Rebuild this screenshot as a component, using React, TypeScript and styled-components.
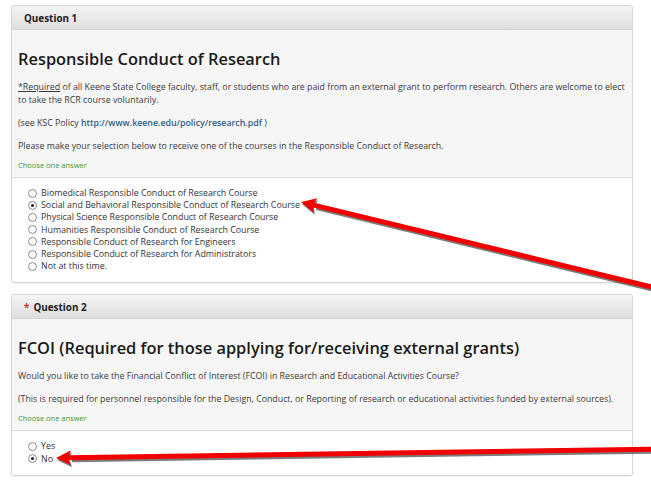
import React from 'react';
import styled, { createGlobalStyle } from 'styled-components';

const GlobalStyle = createGlobalStyle`
    html, body {
        margin: 0;
        padding: 0;
        background: #ffffff;
    }
    body {
        font-family: "Open Sans", "Liberation Sans", sans-serif;
        color: #333333;
    }
`;

const Page = styled.div`
    position: relative;
    width: 651px;
    height: 482px;
    overflow: hidden;
    padding: 5px 0 0 11px;
    box-sizing: border-box;
    display: flex;
    flex-direction: column;
    gap: 11px;
`;

const Panel = styled.section`
    width: 622px;
    box-sizing: border-box;
    border: 1px solid #d6d6d6;
    border-radius: 3px;
    background: #f6f6f6;
    box-shadow: 0 1px 2px rgba(0, 0, 0, 0.06);
    overflow: hidden;
`;

const PanelHeader = styled.div`
    height: 23px;
    display: flex;
    align-items: center;
    padding-left: 12px;
    background: linear-gradient(#f4f4f4, #dedede);
    border-bottom: 1px solid #d4d4d4;
    font-size: 9.9px;
    font-weight: 700;
    color: #222;
`;

const Star = styled.span`
    color: #c0392b;
    margin-right: 4px;
`;

const PanelBody = styled.div`
    padding: 17px 6px 6px 6px;
`;

const Title = styled.h2`
    margin: 0 0 10px 0;
    font-size: 16.4px;
    font-weight: 600;
    color: #1a1a1a;
    line-height: 24px;
`;

const Para = styled.p<{ $gap?: number }>`
    margin: 0 0 ${p => p.$gap ?? 10}px 0;
    font-size: 8.8px;
    line-height: 13px;
    color: #3a3a3a;
`;

const Underlined = styled.span`
    text-decoration: underline;
`;

const Link = styled.a`
    color: #2d5f8b;
    font-weight: 600;
    text-decoration: none;
`;

const Hint = styled.div`
    font-size: 7.5px;
    color: #399a39;
    line-height: 12px;
`;

const Options = styled.div`
    background: #ffffff;
    border-top: 1px solid #dcdcdc;
    padding: 9px 0 10px 16px;
    display: flex;
    flex-direction: column;
`;

const OptionRow = styled.label`
    display: flex;
    align-items: center;
    height: 12.2px;
    font-size: 8.85px;
    color: #333;
`;

const Radio = styled.span<{ $checked?: boolean }>`
    width: 7px;
    height: 7px;
    border-radius: 50%;
    border: 1px solid #8a8a8a;
    background: #fbfbfb;
    margin-right: 4px;
    display: flex;
    align-items: center;
    justify-content: center;
    flex-shrink: 0;
    &::after {
        content: '';
        width: 3px;
        height: 3px;
        border-radius: 50%;
        background: ${p => (p.$checked ? '#222' : 'transparent')};
    }
`;

const Overlay = styled.svg`
    position: absolute;
    left: 0;
    top: 0;
    pointer-events: none;
`;

const Option: React.FC<{ label: string; checked?: boolean }> = ({ label, checked }) => (
    <OptionRow>
        <Radio $checked={checked} />
        {label}
    </OptionRow>
);

const rcrOptions = [
    'Biomedical Responsible Conduct of Research Course',
    'Social and Behavioral Responsible Conduct of Research Course',
    'Physical Science Responsible Conduct of Research Course',
    'Humanities Responsible Conduct of Research Course',
    'Responsible Conduct of Research for Engineers',
    'Responsible Conduct of Research for Administrators',
    'Not at this time.'
];

// arrow from tail to tip, drawn as thick red stroke with a dark drop shadow
const Arrow: React.FC<{ x1: number; y1: number; x2: number; y2: number }> = ({ x1, y1, x2, y2 }) => {
    const ang = Math.atan2(y2 - y1, x2 - x1);
    const len = 15;
    const wid = 7.5;
    const bx = x2 - Math.cos(ang) * len;
    const by = y2 - Math.sin(ang) * len;
    const px = -Math.sin(ang) * wid;
    const py = Math.cos(ang) * wid;
    const head = `${x2},${y2} ${bx + px},${by + py} ${bx + Math.cos(ang) * 3},${by + Math.sin(ang) * 3} ${bx - px},${by - py}`;
    return (
        <g>
            <g transform="translate(1,2)" opacity="0.55">
                <line x1={x1} y1={y1} x2={bx} y2={by} stroke="#111" strokeWidth={5} />
                <polygon points={head} fill="#111" />
            </g>
            <line x1={x1} y1={y1} x2={bx + Math.cos(ang) * 3} y2={by + Math.sin(ang) * 3} stroke="#f00000" strokeWidth={5} />
            <polygon points={head} fill="#f00000" />
        </g>
    );
};

export default function App() {
    return (
        <>
            <GlobalStyle />
            <Page>
                <Panel>
                    <PanelHeader>Question 1</PanelHeader>
                    <PanelBody>
                        <Title>Responsible Conduct of Research</Title>
                        <Para>
                            <Underlined>*Required</Underlined> of all Keene State College faculty, staff, or students who are paid from an external grant to perform research. Others are welcome to elect to take the RCR course voluntarily.
                        </Para>
                        <Para>
                            (see KSC Policy <Link>http://www.keene.edu/policy/research.pdf</Link> )
                        </Para>
                        <Para $gap={6}>
                            Please make your selection below to receive one of the courses in the Responsible Conduct of Research.
                        </Para>
                        <Hint>Choose one answer</Hint>
                    </PanelBody>
                    <Options>
                        {rcrOptions.map((o, i) => (
                            <Option key={o} label={o} checked={i === 1} />
                        ))}
                    </Options>
                </Panel>
                <Panel>
                    <PanelHeader>
                        <Star>*</Star>Question 2
                    </PanelHeader>
                    <PanelBody>
                        <Title>FCOI (Required for those applying for/receiving external grants)</Title>
                        <Para>
                            Would you like to take the Financial Conflict of Interest (FCOI) in Research and Educational Activities Course?
                        </Para>
                        <Para $gap={6}>
                            (This is required for personnel responsible for the Design, Conduct, or Reporting of research or educational activities funded by external sources).
                        </Para>
                        <Hint>Choose one answer</Hint>
                    </PanelBody>
                    <Options>
                        <Option label="Yes" />
                        <Option label="No" checked />
                    </Options>
                </Panel>
                <Overlay width={651} height={482} viewBox="0 0 651 482">
                    <Arrow x1={660} y1={289} x2={301} y2={202} />
                    <Arrow x1={660} y1={449} x2={56} y2={458} />
                </Overlay>
            </Page>
        </>
    );
}
